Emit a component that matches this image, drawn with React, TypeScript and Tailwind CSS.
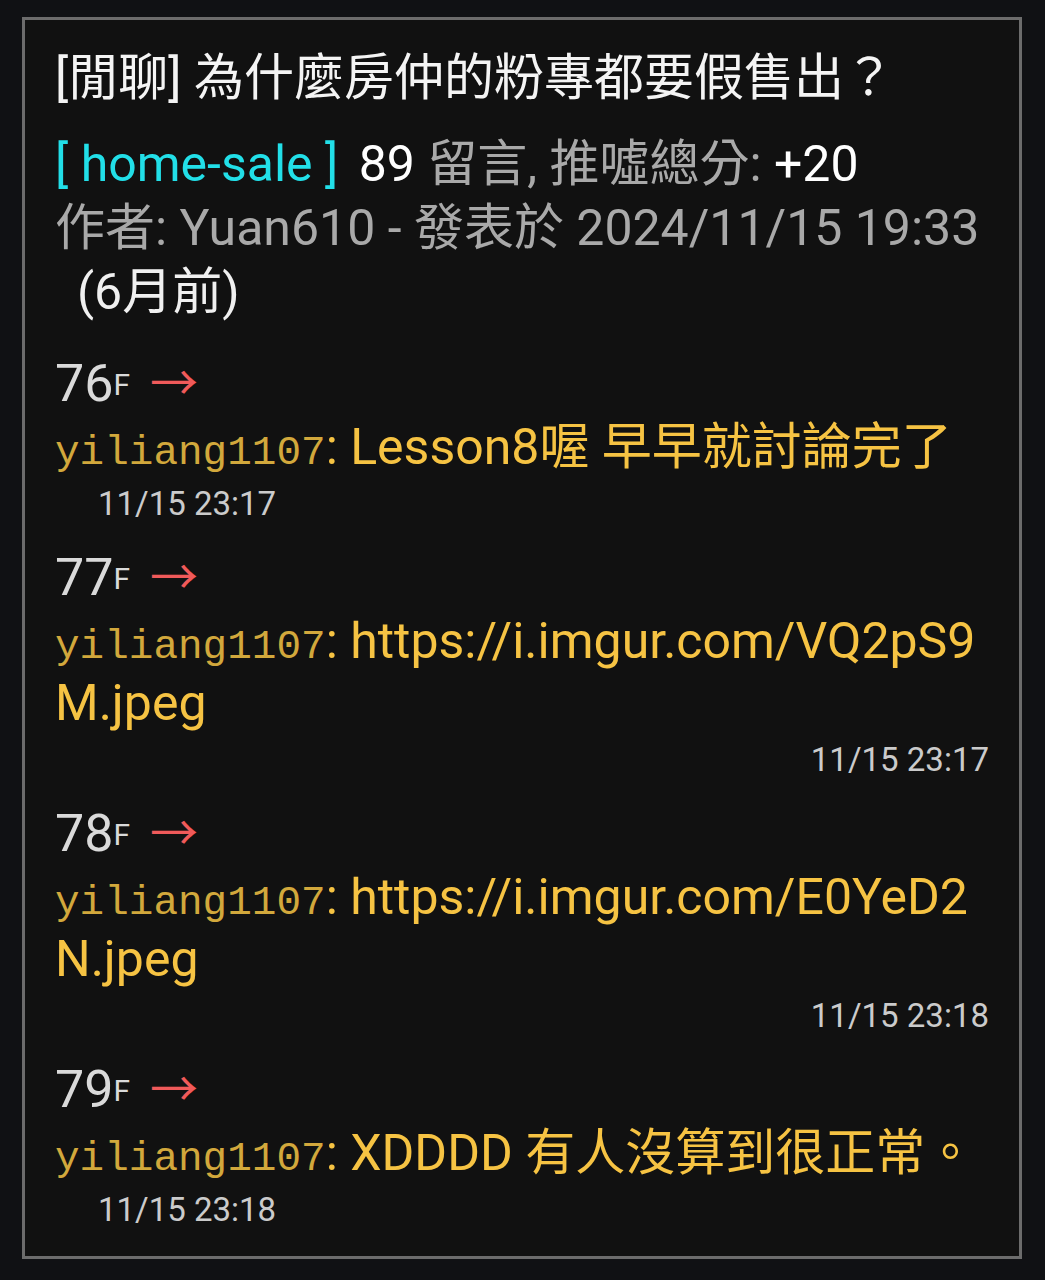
import React from "react";

const comments = [
    { floor: "76", user: "yiliang1107", text: "Lesson8喔 早早就討論完了", time: "11/15 23:17", right: false },
    { floor: "77", user: "yiliang1107", text: "https://i.imgur.com/VQ2pS9M.jpeg", time: "11/15 23:17", right: true },
    { floor: "78", user: "yiliang1107", text: "https://i.imgur.com/E0YeD2N.jpeg", time: "11/15 23:18", right: true },
    { floor: "79", user: "yiliang1107", text: "XDDDD 有人沒算到很正常。", time: "11/15 23:18", right: false },
];

const sans = "font-['Roboto','Noto_Sans_CJK_TC',sans-serif]";

export default function App() {
    return (
        <div className={`min-h-[1280px] bg-[#101114] pt-[17px] pl-[22px] pr-[23px] pb-[21px] ${sans}`}>
            <div className="border-[3px] border-[#6c6c6c] bg-[#111111] px-[30px] pt-[26px] pb-[20px]">
                <h1 className="text-[50px] leading-[64px] text-[#f4f4f4] font-normal">
                    [閒聊] 為什麼房仲的粉專都要假售出？
                </h1>

                <div className="mt-[22px] text-[50px] leading-[64px]">
                    <div>
                        <span className="text-[#22dfe8]">[ home-sale ]</span>
                        <span className="ml-[8px] text-white"> 89</span>
                        <span className="text-[#a9a9a9]"> 留言, 推噓總分: </span>
                        <span className="text-white">+20</span>
                    </div>
                    <div className="text-[#a9a9a9]">作者: Yuan610 - 發表於 2024/11/15 19:33</div>
                    <div className="pl-[22px] text-[#f0f0f0]">(6月前)</div>
                </div>

                <div className="mt-[28px] flex flex-col gap-[16px]">
                    {comments.map((c) => (
                        <div key={c.floor}>
                            <div className="h-[64px] flex items-center text-[#dadada]">
                                <span className="text-[52px] leading-none">{c.floor}</span>
                                <span className="text-[30px] leading-none self-end mb-[16px]">F</span>
                                <span className="ml-[20px] text-[48px] leading-none text-[#f05a5a]">→</span>
                            </div>
                            <div className="text-[50px] leading-[62px] text-[#f6c343] break-all">
                                <span className="font-['Liberation_Mono',monospace] text-[41px] leading-none text-[#d2a83c]">
                                    {c.user}
                                </span>
                                <span>: {c.text}</span>
                            </div>
                            <div
                                className={`text-[33px] leading-[52px] text-[#cbcbcb] ${
                                    c.right ? "text-right" : "pl-[43px]"
                                }`}
                            >
                                {c.time}
                            </div>
                        </div>
                    ))}
                </div>
            </div>
        </div>
    );
}
